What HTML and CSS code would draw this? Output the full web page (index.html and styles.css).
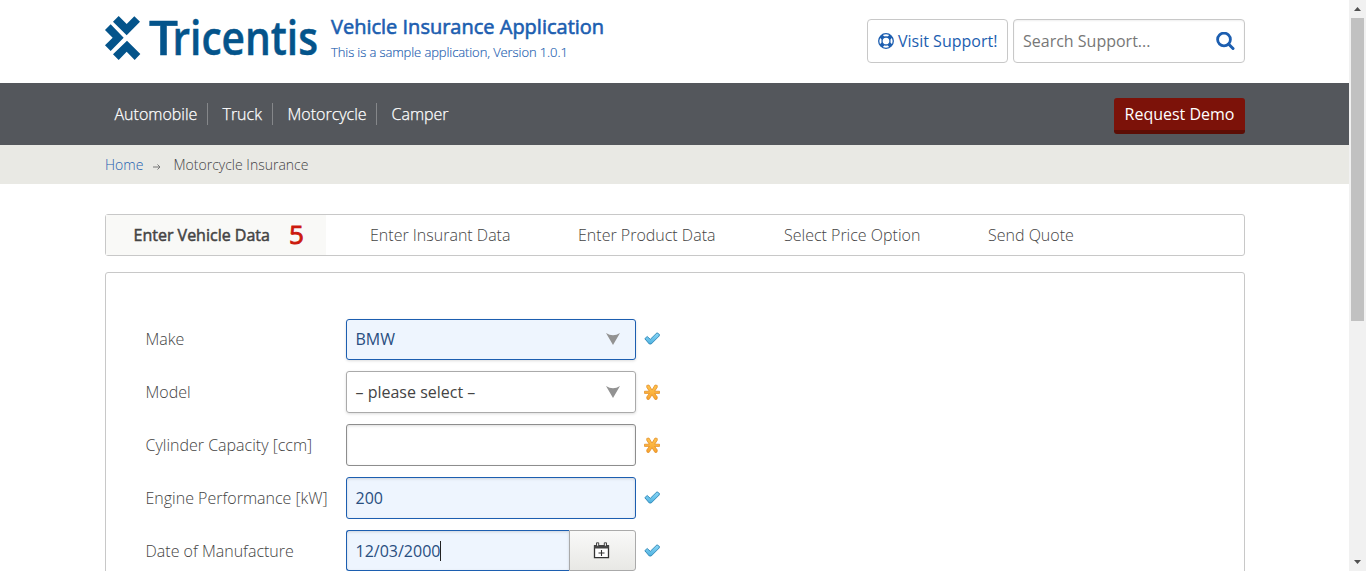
FILE: index.html
```html
<!DOCTYPE html>
<html lang="en">
<head>
<meta charset="utf-8">
<title>Vehicle Insurance Application</title>
<link rel="stylesheet" href="styles.css">
</head>
<body>
<svg width="0" height="0" class="defs">
  <defs>
    <linearGradient id="blue" x1="0" y1="0" x2="0" y2="1"><stop offset="0" stop-color="#8bd8f8"/><stop offset="1" stop-color="#4fb2e0"/></linearGradient>
    <linearGradient id="gold" x1="0" y1="0" x2="0" y2="1"><stop offset="0" stop-color="#ffc34d"/><stop offset="1" stop-color="#f9a52f"/></linearGradient>
    <symbol id="check" viewBox="0 0 16 16"><path d="M.8 7.7 3.2 5.5 6.3 8.3 13 1.8 15.4 3.4 15.2 5 7.2 13 5.3 13Z" fill="url(#blue)" stroke="#2e86b5" stroke-width=".9" stroke-linejoin="round"/></symbol>
    <symbol id="star" viewBox="0 0 16 16"><path d="M2.8 1.4 5 1 8 6 11 1 13.2 1.4 13.3 3.2 10.7 7.2 15.5 7.2 15.5 9.4 10.7 9.4 13.3 13 13 15.2 11 15.5 8 10.8 5 15.5 3 15.2 2.7 13 5.3 9.4.5 9.4.5 7.2 5.3 7.2 2.7 3.2Z" fill="url(#gold)" stroke="#e0861c" stroke-width=".7" stroke-linejoin="round"/></symbol>
    <symbol id="arrow" viewBox="0 0 14 12"><path d="M0 0Q7 4.4 14 0L7 12Z" fill="#929292"/></symbol>
  </defs>
</svg>
<div class="window">
  <div class="page">
    <header class="header wrap">
      <svg class="logo" width="214" height="60" viewBox="0 0 214 60">
        <g fill="#04548b" transform="translate(-10 -13) scale(.33333)">
          <path d="M54 65 71 48 95 72 118 49 135 65 95 106Z"/>
          <path d="M47 73 86 113 47 153 30 136 53 113 30 90Z"/>
          <path d="M96 122 136 162 119 180 95 155 71 180 54 163Z"/>
        </g>
        <text class="logo-text" y="42"><tspan x="44" textLength="29" lengthAdjust="spacingAndGlyphs">T</tspan><tspan x="67.5" textLength="145.5" lengthAdjust="spacingAndGlyphs">ricentis</tspan></text>
      </svg>
      <div class="titles">
        <h1 class="title">Vehicle Insurance Application</h1>
        <p class="subtitle">This is a sample application, Version 1.0.1</p>
      </div>
      <div class="support">
        <a class="visit">
          <svg width="16" height="16" viewBox="0 0 16 16" fill="none" stroke="#1c5eb0"><circle cx="8" cy="8" r="7.3" stroke-width="1.3"/><circle cx="8" cy="8" r="4" stroke-width="1.3"/><path d="M3 3 5.3 5.3M13 3 10.7 5.3M3 13 5.3 10.7M13 13 10.7 10.7" stroke-width="4"/></svg>
          <span class="visit-text">Visit Support!</span>
        </a>
        <div class="search">
          <span class="search-text">Search Support...</span>
          <svg width="19" height="19" viewBox="0 0 19 19" fill="none" stroke="#1c5eb0"><circle cx="8" cy="7.5" r="6.4" stroke-width="2.8"/><path d="M12.5 12 17 16.5" stroke-width="3" stroke-linecap="round"/></svg>
        </div>
      </div>
    </header>
    <nav class="nav">
      <div class="nav-inner wrap">
        <a class="nav-link auto">Automobile</a><a class="nav-link truck">Truck</a><a class="nav-link moto">Motorcycle</a><a class="nav-link camper">Camper</a>
        <a class="demo">Request Demo</a>
      </div>
    </nav>
    <div class="crumbs">
      <div class="crumbs-inner wrap">
        <a class="home">Home</a>
        <svg class="crumb-arrow" width="8" height="6" viewBox="0 0 8 6" fill="none" stroke="#777"><path d="M0 3H7M4.5.5 7 3 4.5 5.5"/></svg>
        <span class="current">Motorcycle Insurance</span>
      </div>
    </div>
    <div class="tabs wrap">
      <div class="tab active"><span class="tab-name">Enter Vehicle Data</span><span class="count">5</span></div>
      <div class="tab insurant">Enter Insurant Data</div>
      <div class="tab product">Enter Product Data</div>
      <div class="tab price">Select Price Option</div>
      <div class="tab quote">Send Quote</div>
    </div>
    <form class="form wrap">
      <div class="row first"><label class="label">Make</label><div class="field valid select"><span>BMW</span><svg width="14" height="12"><use href="#arrow"/></svg></div><svg class="mark" width="16" height="16"><use href="#check"/></svg></div>
      <div class="row"><label class="label">Model</label><div class="field select"><span class="option">– please select –</span><svg width="14" height="12"><use href="#arrow"/></svg></div><svg class="mark" width="16" height="16"><use href="#star"/></svg></div>
      <div class="row"><label class="label">Cylinder Capacity [ccm]</label><div class="field input"></div><svg class="mark" width="16" height="16"><use href="#star"/></svg></div>
      <div class="row"><label class="label">Engine Performance [kW]</label><div class="field valid input"><span>200</span></div><svg class="mark" width="16" height="16"><use href="#check"/></svg></div>
      <div class="row"><label class="label">Date of Manufacture</label><div class="date"><div class="field valid input date-input"><span>12/03/2000</span><i class="caret"></i></div><div class="picker"><svg width="17" height="17" viewBox="0 0 17 17"><path d="M1.5 4H15.5V15.7H1.5Z" fill="#fff" stroke="#333" stroke-width="1.3"/><path d="M1 3H16V6.5H1Z" fill="#444"/><path d="M3.5 .8H5.7V4.2H3.5ZM11.3 .8H13.5V4.2H11.3Z" fill="#eee" stroke="#333" stroke-width=".9"/><path d="M8.5 8V14M5.5 11H11.5" stroke="#333" stroke-width="1.1"/></svg></div></div><svg class="mark" width="16" height="16"><use href="#check"/></svg></div>
    </form>
  </div>
  <div class="scrollbar">
    <svg width="7" height="4" viewBox="0 0 7 4"><path d="M0 4 3.5 0 7 4Z" fill="#505050"/></svg>
    <div class="track"><div class="thumb"></div></div>
    <svg width="7" height="4" viewBox="0 0 7 4"><path d="M0 0 3.5 4 7 0Z" fill="#505050"/></svg>
  </div>
</div>
</body>
</html>
```
FILE: styles.css
```css
* { box-sizing: border-box; }
body { margin: 0; overflow: hidden; font: 300 16px/24px "Open Sans", sans-serif; color: #444; }
.defs { position: absolute; }
.window { display: flex; height: 571px; }
.page { width: 1349px; height: 571px; overflow: hidden; background: #fff; }
.wrap { width: 1140px; margin: 0 auto 0 105px; }
.page, .page * { white-space: nowrap; }

.header { display: flex; height: 83px; }
.logo { flex: none; margin-top: 13px; overflow: visible; }
.logo-text { font: 600 47px "Open Sans", sans-serif; fill: #04548b; stroke: #04548b; stroke-width: .5px; }
.titles { margin: 13px 0 0 12px; }
.title { margin: 0; font-size: 20px; line-height: 28px; font-weight: 400; -webkit-text-stroke: .6px #1c5eb0; color: #1c5eb0; }
.subtitle { margin: 2px 0 0; font-size: 13px; line-height: 18px; letter-spacing: -.1px; color: #1c5eb0; -webkit-text-stroke: .15px #1c5eb0; }
.support { display: flex; gap: 5px; margin: 19px 0 0 auto; }
.visit, .search { display: flex; align-items: center; height: 44px; border: 1px solid #c8c8c8; border-radius: 4px; font-weight: 400; }
.visit { width: 141px; padding-left: 10px; gap: 4px; color: #1c5eb0; }
.search { width: 232px; padding: 0 9px; justify-content: space-between; color: #777; box-shadow: inset 0 1px 2px #0001; }

.nav { height: 62px; background: #54575c; }
.nav-inner { display: flex; align-items: center; height: 62px; color: #fff; }
.nav-link { height: 22px; line-height: 22px; padding-left: 14.5px; border-right: 1px solid #85878a; -webkit-text-stroke: .25px #fff; }
.auto { width: 103px; padding-left: 9.5px; }
.truck { width: 65px; }
.moto { width: 104px; }
.camper { border: 0; }
.demo { width: 131px; height: 36px; margin: 3px 0 0 auto; border-bottom: 4px solid #5c0d05; border-radius: 3px; background: #7c1209; text-align: center; line-height: 32px; font-weight: 400; }

.crumbs { height: 39px; background: #e9e9e4; }
.crumbs-inner { display: flex; align-items: center; height: 39px; font-size: 14px; }
.home { width: 48px; color: #1c5eb0; }
.crumb-arrow { margin: 5px 12.5px 0 0; }

.tabs { display: flex; height: 42px; margin-top: 30px; border: 1px solid #c8c8c8; border-radius: 3px; line-height: 41px; }
.active { display: flex; width: 220px; padding-left: 27.5px; background: #f9f9f7; font-weight: 400; -webkit-text-stroke: .5px #444; }
.tab-name { width: 155.5px; }
.count { font-size: 26px; line-height: 38px; color: #cc1a0d; -webkit-text-stroke: .9px #cc1a0d; }
.insurant { width: 252px; padding-left: 44px; }
.product { width: 206px; }
.price { width: 204px; }

.form { height: 400px; margin-top: 16px; padding: 46px 40px 0 39.5px; border: 1px solid #c8c8c8; border-radius: 3px; }
.row { display: flex; height: 42px; margin-bottom: 11px; }
.row.first { height: 41px; }
.label { width: 200.5px; line-height: 42px; }
.first .label { line-height: 41px; }
.field { display: flex; align-items: center; width: 290px; height: 42px; padding: 0 15px 1px 8.5px; border: 1px solid #aaa; border-radius: 3px; color: #444; font-weight: 400; }
.select { justify-content: space-between; box-shadow: 0 1px 3px #0002; }
.input { border-color: #8d8d8d; box-shadow: inset 0 1px 3px #0002; }
.valid { border-color: #1c5eb0; background: #eef5fe; color: #294e80; }
.select.valid { height: 41px; }
.mark { margin: 13px 0 0 8px; }
.first .mark { margin-top: 12px; }
.date { display: flex; width: 290px; }
.date-input { width: 223px; height: 41px; padding-bottom: 0; padding-top: 1px; border-right: 0; border-radius: 3px 0 0 3px; }
.caret { width: 1px; height: 20px; background: #222; }
.picker { display: flex; align-items: center; justify-content: center; width: 67px; height: 41px; padding-right: 2px; border: 1px solid #aaa; border-radius: 0 3px 3px 0; background: linear-gradient(#f9f9f8, #e8e8e5); }

.scrollbar { display: flex; flex-direction: column; align-items: center; width: 17px; padding: 7px 0 7px; background: #f1f1f1; }
.track { width: 13px; flex: 1; padding-top: 7px; }
.thumb { height: 303px; background: #c1c1c1; }
```
